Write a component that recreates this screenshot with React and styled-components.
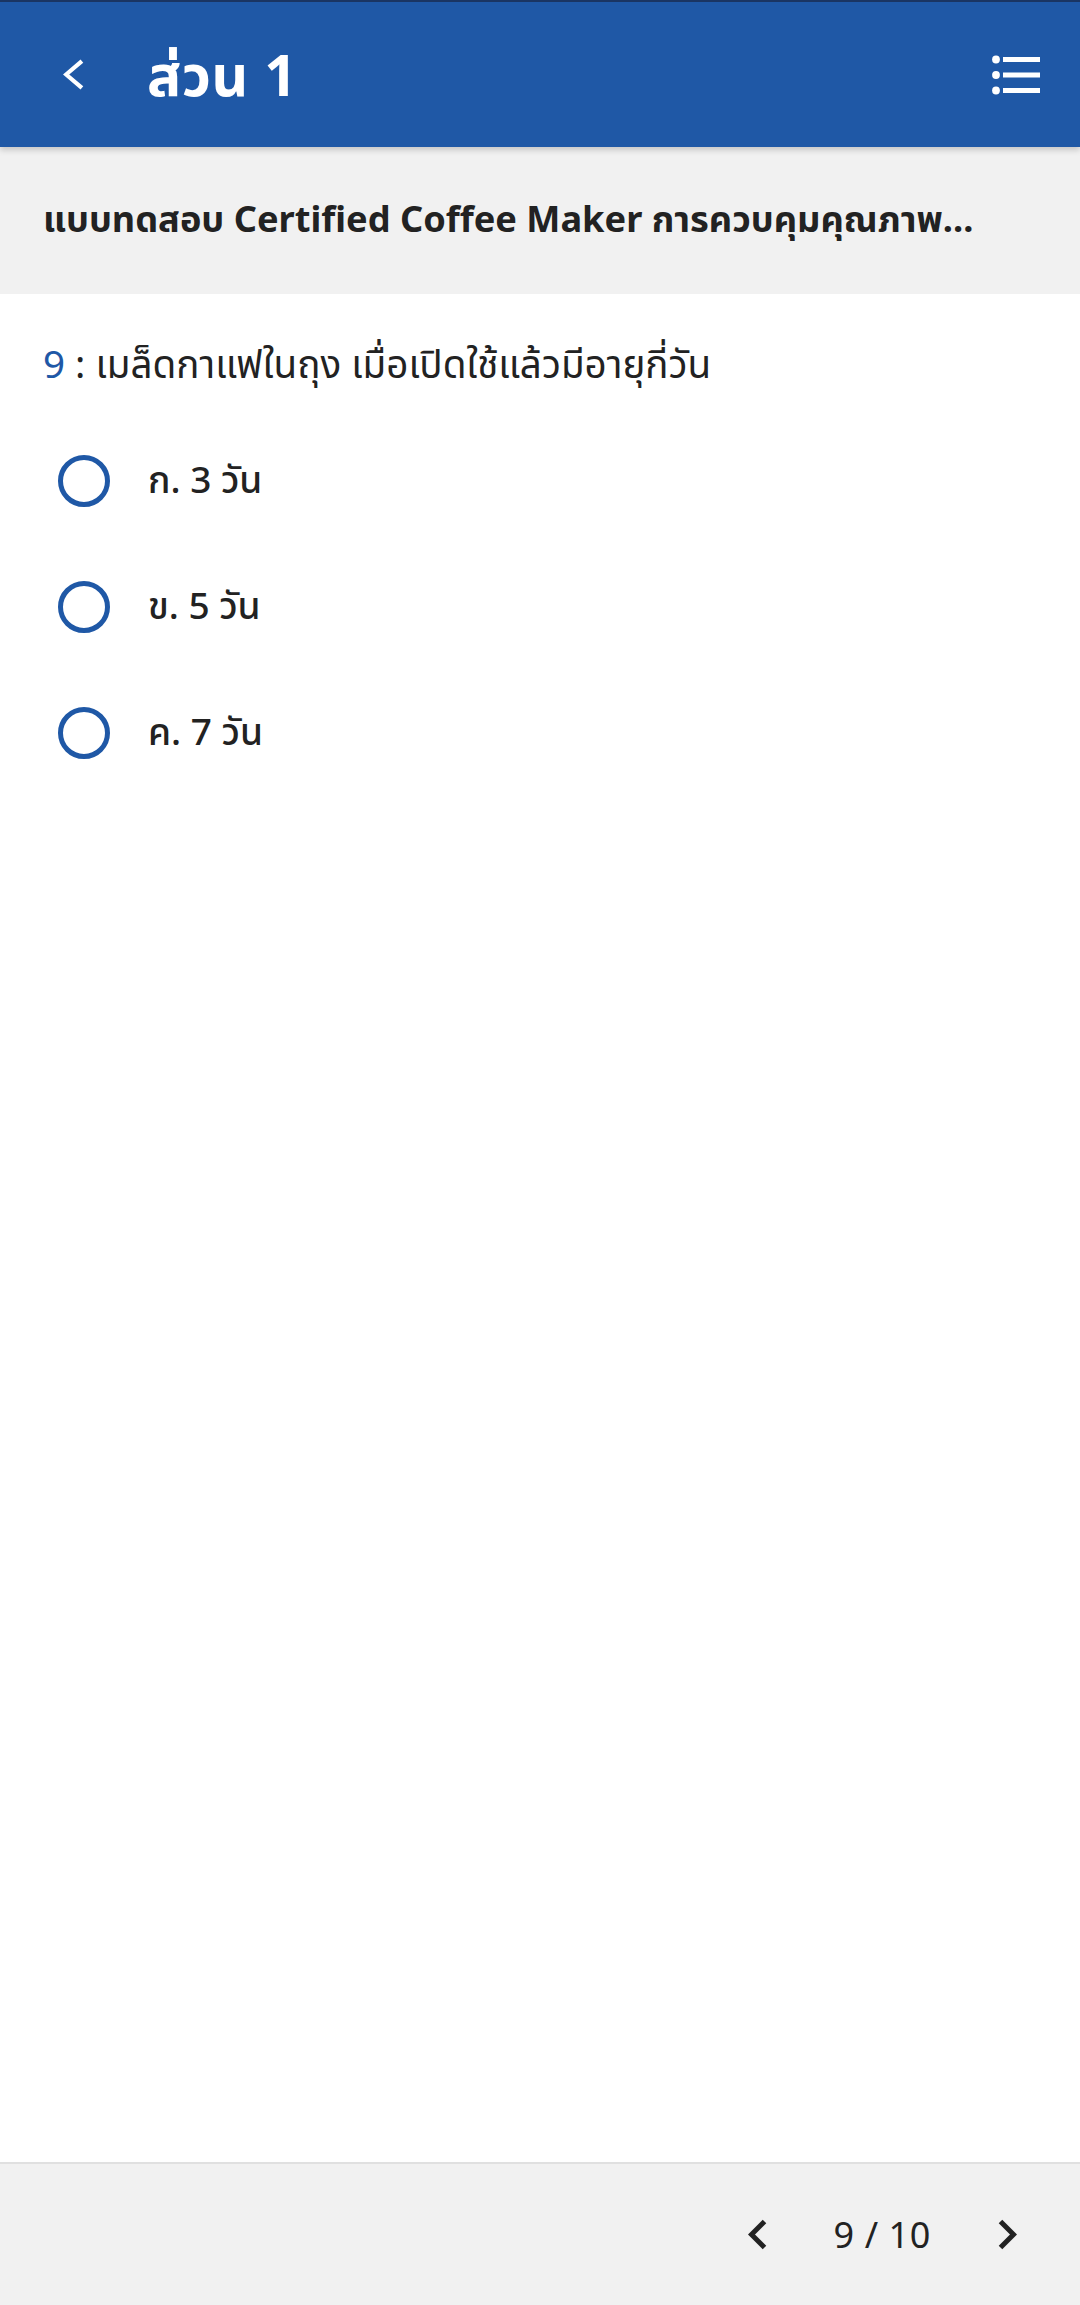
import React from "react";
import styled, { createGlobalStyle } from "styled-components";

const GlobalStyle = createGlobalStyle`
  html, body { margin: 0; padding: 0; background: #ffffff; }
  body { font-family: "Noto Sans", "Noto Sans Thai", "Open Sans", sans-serif; }
  * { box-sizing: border-box; }
`;

const Page = styled.div`
  display: flex;
  flex-direction: column;
  min-height: 2305px;
  width: 1080px;
`;

const Header = styled.header`
  height: 147px;
  background: #1f58a6;
  border-top: 2px solid #1a3563;
  display: flex;
  align-items: center;
  padding: 0 40px 0 61px;
  position: relative;
  z-index: 2;
  box-shadow: 0 3px 6px rgba(0, 0, 0, 0.18);
`;

const IconButton = styled.button`
  background: none;
  border: none;
  padding: 0;
  display: flex;
  align-items: center;
  justify-content: center;
  cursor: pointer;
  width: ${(p) => p.$w || 36}px;
  height: ${(p) => p.$h || 36}px;
`;

const Title = styled.h1`
  margin: 0 0 0 62px;
  flex: 1;
  color: #ffffff;
  font-size: 57px;
  font-weight: 700;
  line-height: 1;
  letter-spacing: 0.5px;
`;

const SubBar = styled.div`
  height: 147px;
  background: #f1f1f1;
  display: flex;
  align-items: center;
  padding: 0 43px;
`;

const SubTitle = styled.h2`
  margin: 0;
  font-size: 36.2px;
  font-weight: 700;
  color: #222222;
  white-space: nowrap;
  overflow: hidden;
  text-overflow: ellipsis;
`;

const Content = styled.main`
  flex: 1;
  padding: 43px 43px 0;
  display: flex;
  flex-direction: column;
`;

const Question = styled.p`
  margin: 0 0 66px;
  font-size: 38.6px;
  line-height: 52px;
  color: #222222;
`;

const QNum = styled.span`
  color: #1f58a6;
`;

const OptionList = styled.div`
  display: flex;
  flex-direction: column;
  gap: 74px;
`;

const Option = styled.label`
  display: flex;
  align-items: center;
  height: 52px;
  cursor: pointer;
`;

const Radio = styled.span`
  width: 52px;
  height: 52px;
  border-radius: 50%;
  border: 5px solid #1f58a6;
  margin-left: 15px;
  margin-right: 38px;
  flex: none;
`;

const OptionText = styled.span`
  font-size: 37px;
  font-weight: 500;
  color: #222222;
`;

const Footer = styled.footer`
  height: 143px;
  background: #f1f1f1;
  border-top: 2px solid #e0e0e0;
  display: flex;
  align-items: center;
  justify-content: flex-end;
  padding-right: 63px;
`;

const PageText = styled.span`
  font-size: 36px;
  color: #222222;
  margin: 0 66px;
  letter-spacing: 0.6px;
`;

const Chevron = ({ dir = "left", color = "#222", w = 20, h = 30, stroke = 4.5 }) => {
  const s = stroke / 2;
  const d =
    dir === "left"
      ? `M${w - s} ${s} L${s + 1} ${h / 2} L${w - s} ${h - s}`
      : `M${s} ${s} L${w - s - 1} ${h / 2} L${s} ${h - s}`;
  return (
    <svg width={w} height={h} viewBox={`0 0 ${w} ${h}`} fill="none">
      <path d={d} stroke={color} strokeWidth={stroke} strokeLinecap="butt" strokeLinejoin="miter" />
    </svg>
  );
};

const ListIcon = () => (
  <svg width="48" height="40" viewBox="0 0 48 40" fill="#ffffff">
    <circle cx="4" cy="4.5" r="3.9" />
    <circle cx="4" cy="20" r="3.9" />
    <circle cx="4" cy="35.5" r="3.9" />
    <rect x="11" y="2" width="37" height="5" />
    <rect x="11" y="17.5" width="37" height="5" />
    <rect x="11" y="33" width="37" height="5" />
  </svg>
);

const options = ["ก. 3 วัน", "ข. 5 วัน", "ค. 7 วัน"];

export default function App() {
  return (
    <>
      <GlobalStyle />
      <Page>
        <Header>
          <IconButton $w={24} $h={34} aria-label="back">
            <Chevron dir="left" color="#ffffff" w={21} h={31} stroke={4.2} />
          </IconButton>
          <Title>ส่วน 1</Title>
          <IconButton $w={48} $h={40} aria-label="menu">
            <ListIcon />
          </IconButton>
        </Header>
        <SubBar>
          <SubTitle>แบบทดสอบ Certified Coffee Maker การควบคุมคุณภาพ...</SubTitle>
        </SubBar>
        <Content>
          <Question>
            <QNum>9</QNum> : เมล็ดกาแฟในถุง เมื่อเปิดใช้แล้วมีอายุกี่วัน
          </Question>
          <OptionList>
            {options.map((o) => (
              <Option key={o}>
                <Radio />
                <OptionText>{o}</OptionText>
              </Option>
            ))}
          </OptionList>
        </Content>
        <Footer>
          <IconButton $w={20} $h={34} aria-label="previous">
            <Chevron dir="left" w={19} h={31} stroke={5} />
          </IconButton>
          <PageText>9 / 10</PageText>
          <IconButton $w={20} $h={34} aria-label="next">
            <Chevron dir="right" w={19} h={31} stroke={5} />
          </IconButton>
        </Footer>
      </Page>
    </>
  );
}
